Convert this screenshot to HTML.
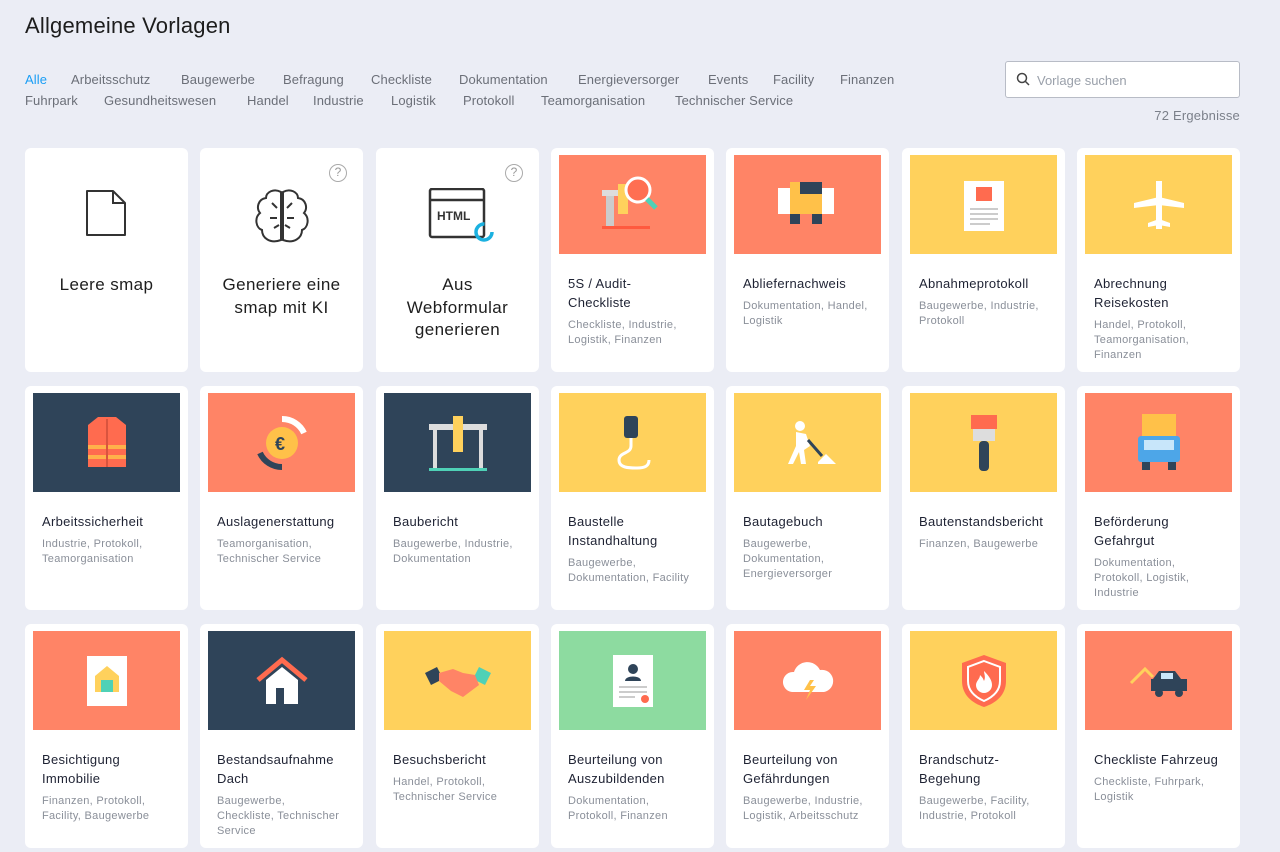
<!DOCTYPE html>
<html><head><meta charset="utf-8"><style>
*{margin:0;padding:0;box-sizing:border-box}
body{width:1280px;height:852px;overflow:hidden;background:#ebedf5;font-family:"Liberation Sans",sans-serif;position:relative;color:#222}
h1{position:absolute;left:25px;top:13px;font-size:22px;font-weight:400;color:#1d1d1d;letter-spacing:0.2px}
.n{position:absolute;font-size:13px;color:#6b6f78;white-space:nowrap;letter-spacing:0.1px}
.search{position:absolute;left:1005px;top:61px;width:235px;height:37px;border:1px solid #b8bcc6;border-radius:3px;background:#fff;font-size:13px;color:#9aa0aa;padding:11px 0 0 31px}
.cnt{position:absolute;right:40px;top:108px;font-size:13px;color:#7b808a;letter-spacing:0.2px}
.card{position:absolute;width:163px;height:224px;background:#fff;border-radius:6px;overflow:hidden}
.img{position:absolute;left:8px;top:7px;width:147px;height:99px;display:flex;align-items:center;justify-content:center}
.t{position:absolute;left:17px;top:126px;right:6px;font-size:13px;line-height:19px;color:#1e2233;letter-spacing:0.3px}
.g{font-size:11px;line-height:15px;color:#8a8f99;margin-top:6px;letter-spacing:0.3px}
.big{position:absolute;left:0;right:0;top:126px;text-align:center;font-size:17px;line-height:22.5px;color:#1e1e1e;letter-spacing:0.4px}
.q{position:absolute;right:16px;top:16px;width:18px;height:18px;border:1.5px solid #aaa;border-radius:50%;font-size:12px;color:#999;text-align:center;line-height:15px}
.co{background:#ff8466}.ye{background:#ffd15c}.da{background:#2f4459}.gr{background:#8ddba0}
</style></head><body>
<h1>Allgemeine Vorlagen</h1>
<div class="n" style="top:72px;left:25px;color:#1a9ef5">Alle</div>
<div class="n" style="top:72px;left:71px">Arbeitsschutz</div>
<div class="n" style="top:72px;left:181px">Baugewerbe</div>
<div class="n" style="top:72px;left:283px">Befragung</div>
<div class="n" style="top:72px;left:371px">Checkliste</div>
<div class="n" style="top:72px;left:459px">Dokumentation</div>
<div class="n" style="top:72px;left:578px">Energieversorger</div>
<div class="n" style="top:72px;left:708px">Events</div>
<div class="n" style="top:72px;left:773px">Facility</div>
<div class="n" style="top:72px;left:840px">Finanzen</div>
<div class="n" style="top:93px;left:25px">Fuhrpark</div>
<div class="n" style="top:93px;left:104px">Gesundheitswesen</div>
<div class="n" style="top:93px;left:247px">Handel</div>
<div class="n" style="top:93px;left:313px">Industrie</div>
<div class="n" style="top:93px;left:391px">Logistik</div>
<div class="n" style="top:93px;left:463px">Protokoll</div>
<div class="n" style="top:93px;left:541px">Teamorganisation</div>
<div class="n" style="top:93px;left:675px">Technischer Service</div>
<div class="search"><svg style="position:absolute;left:10px;top:10px" width="14" height="14" viewBox="0 0 14 14"><circle cx="6" cy="6" r="4.5" fill="none" stroke="#444" stroke-width="1.5"/><path d="M9.5 9.5L13 13" stroke="#444" stroke-width="1.5"/></svg>Vorlage suchen</div>
<div class="cnt">72 Ergebnisse</div>

<div class="card" style="left:25px;top:148px"><svg style="position:absolute;left:60px;top:40px" width="44" height="50" viewBox="0 0 44 50"><path d="M2 3h26l12 12v32H2z" fill="none" stroke="#333" stroke-width="2" stroke-linejoin="round"/><path d="M28 3v12h12" fill="none" stroke="#333" stroke-width="2"/></svg><div class="big" style="top:126px">Leere smap</div></div>
<div class="card" style="left:200px;top:148px"><div class="q">?</div><svg style="position:absolute;left:52px;top:40px" width="60" height="58" viewBox="0 0 60 58"><path d="M29 4C22 0 14 4 14 10 6 11 4 20 8 25 2 30 4 40 10 42 10 50 18 56 29 52Z M31 4C38 0 46 4 46 10 54 11 56 20 52 25 58 30 56 40 50 42 50 50 42 56 31 52Z" fill="none" stroke="#333" stroke-width="2"/><path d="M30 4V52M20 15l5 5M40 15l-5 5M18 30h7M42 30h-7M22 40l5-3M38 40l-5-3" stroke="#333" stroke-width="2"/></svg><div class="big">Generiere eine<br>smap mit KI</div></div>
<div class="card" style="left:376px;top:148px"><div class="q">?</div><svg style="position:absolute;left:52px;top:40px" width="70" height="56" viewBox="0 0 70 56"><rect x="2" y="1" width="54" height="48" rx="2" fill="none" stroke="#333" stroke-width="2.5"/><path d="M2 12h54" stroke="#333" stroke-width="2.5"/><text x="9" y="32" font-family="Liberation Sans" font-weight="700" font-size="12" fill="#333">HTML</text><circle cx="56" cy="44" r="8" fill="none" stroke="#1bb1e0" stroke-width="3.5" stroke-dasharray="38 12"/></svg><div class="big">Aus<br>Webformular<br>generieren</div></div>

<div class="card" style="left:551px;top:148px"><div class="img co"><svg width="70" height="70" viewBox="0 0 70 70"><rect x="8" y="20" width="8" height="36" fill="#ccc"/><rect x="4" y="20" width="30" height="6" fill="#ddd"/><rect x="20" y="14" width="10" height="30" fill="#ffd15c"/><circle cx="40" cy="20" r="12" fill="#ff6f52" stroke="#fff" stroke-width="3"/><path d="M49 29l9 9" stroke="#4fd1b6" stroke-width="5"/><rect x="4" y="56" width="48" height="3" fill="#ff5a3f"/></svg></div><div class="t">5S / Audit-<br>Checkliste<div class="g">Checkliste, Industrie,<br>Logistik, Finanzen</div></div></div>
<div class="card" style="left:726px;top:148px"><div class="img co"><svg width="60" height="50" viewBox="0 0 60 50"><rect x="0" y="8" width="56" height="26" fill="#fff"/><rect x="12" y="2" width="32" height="32" fill="#ffc149"/><rect x="22" y="2" width="22" height="12" fill="#2f4459"/><rect x="12" y="34" width="10" height="10" fill="#2f4459"/><rect x="34" y="34" width="10" height="10" fill="#2f4459"/></svg></div><div class="t">Abliefernachweis<div class="g">Dokumentation, Handel,<br>Logistik</div></div></div>
<div class="card" style="left:902px;top:148px"><div class="img ye"><svg width="44" height="56" viewBox="0 0 44 56"><rect x="2" y="4" width="40" height="50" fill="#fff"/><rect x="14" y="10" width="16" height="14" fill="#ff6b4f"/><path d="M8 32h28M8 37h28M8 42h28M8 47h20" stroke="#ccc" stroke-width="2"/></svg></div><div class="t">Abnahmeprotokoll<div class="g">Baugewerbe, Industrie,<br>Protokoll</div></div></div>
<div class="card" style="left:1077px;top:148px"><div class="img ye"><svg width="50" height="52" viewBox="0 0 50 52"><path d="M22 2h6v48h-6z M0 24l25-6 25 6v5l-25-3-25 3z M14 44l11-4 11 4v4l-11-2-11 2z" fill="#fff"/></svg></div><div class="t">Abrechnung<br>Reisekosten<div class="g">Handel, Protokoll,<br>Teamorganisation,<br>Finanzen</div></div></div>

<div class="card" style="left:25px;top:386px"><div class="img da"><svg width="46" height="56" viewBox="0 0 46 56"><path d="M4 10l10-8h18l10 8v42H4z" fill="#ff6b4f"/><path d="M4 32h38M4 42h38" stroke="#ffb14a" stroke-width="4"/><path d="M23 4v48" stroke="#d9543e" stroke-width="2"/></svg></div><div class="t">Arbeitssicherheit<div class="g">Industrie, Protokoll,<br>Teamorganisation</div></div></div>
<div class="card" style="left:200px;top:386px"><div class="img co"><svg width="60" height="60" viewBox="0 0 60 60"><path d="M30 6a24 24 0 0 1 22 14" stroke="#fff" stroke-width="6" fill="none"/><path d="M30 54a24 24 0 0 1-22-14" stroke="#2f4459" stroke-width="6" fill="none"/><circle cx="30" cy="30" r="16" fill="#ffc149"/><text x="23" y="37" font-size="18" font-weight="700" fill="#2f4459" font-family="Liberation Sans">€</text></svg></div><div class="t">Auslagenerstattung<div class="g">Teamorganisation,<br>Technischer Service</div></div></div>
<div class="card" style="left:376px;top:386px"><div class="img da"><svg width="70" height="62" viewBox="0 0 70 62"><rect x="6" y="12" width="58" height="6" fill="#ddd"/><rect x="10" y="12" width="4" height="46" fill="#ddd"/><rect x="56" y="12" width="4" height="46" fill="#ddd"/><rect x="30" y="4" width="10" height="36" fill="#ffd15c"/><rect x="6" y="56" width="58" height="3" fill="#4fd1b6"/></svg></div><div class="t">Baubericht<div class="g">Baugewerbe, Industrie,<br>Dokumentation</div></div></div>
<div class="card" style="left:551px;top:386px"><div class="img ye"><svg width="50" height="62" viewBox="0 0 50 62"><rect x="16" y="4" width="14" height="22" rx="3" fill="#2f4459"/><path d="M23 26v8c0 8-12 6-12 14s10 8 18 8 12-2 12-8" fill="none" stroke="#fff" stroke-width="3"/></svg></div><div class="t">Baustelle<br>Instandhaltung<div class="g">Baugewerbe,<br>Dokumentation, Facility</div></div></div>
<div class="card" style="left:726px;top:386px"><div class="img ye"><svg width="60" height="50" viewBox="0 0 60 50"><circle cx="22" cy="8" r="5" fill="#fff"/><path d="M18 14l10 2 4 12-6 4 2 14h-5l-2-12-6 12h-5l8-18z" fill="#fff"/><path d="M30 22l14 16" stroke="#2f4459" stroke-width="3"/><path d="M40 44l8-8 10 10H40z" fill="#fff"/></svg></div><div class="t">Bautagebuch<div class="g">Baugewerbe,<br>Dokumentation,<br>Energieversorger</div></div></div>
<div class="card" style="left:902px;top:386px"><div class="img ye"><svg width="30" height="60" viewBox="0 0 30 60"><rect x="2" y="2" width="26" height="14" fill="#ff6b4f"/><rect x="4" y="16" width="22" height="12" fill="#ddd"/><rect x="10" y="28" width="10" height="30" rx="4" fill="#2f4459"/></svg></div><div class="t">Bautenstandsbericht<div class="g">Finanzen, Baugewerbe</div></div></div>
<div class="card" style="left:1077px;top:386px"><div class="img co"><svg width="50" height="62" viewBox="0 0 50 62"><rect x="8" y="2" width="34" height="24" fill="#ffc149"/><rect x="4" y="24" width="42" height="26" rx="3" fill="#4da6e8"/><rect x="10" y="28" width="30" height="10" fill="#c8e6fa"/><rect x="8" y="50" width="8" height="8" fill="#2f4459"/><rect x="34" y="50" width="8" height="8" fill="#2f4459"/></svg></div><div class="t">Beförderung<br>Gefahrgut<div class="g">Dokumentation,<br>Protokoll, Logistik,<br>Industrie</div></div></div>

<div class="card" style="left:25px;top:624px"><div class="img co"><svg width="44" height="54" viewBox="0 0 44 54"><rect x="2" y="2" width="40" height="50" fill="#fff"/><path d="M10 22l12-10 12 10v16H10z" fill="#ffd15c"/><rect x="16" y="26" width="12" height="12" fill="#4fd1b6"/></svg></div><div class="t">Besichtigung<br>Immobilie<div class="g">Finanzen, Protokoll,<br>Facility, Baugewerbe</div></div></div>
<div class="card" style="left:200px;top:624px"><div class="img da"><svg width="56" height="50" viewBox="0 0 56 50"><path d="M4 24L28 4l24 20" fill="none" stroke="#ff6b4f" stroke-width="5"/><path d="M12 24l16-13 16 13v24H12z" fill="#fff"/><rect x="22" y="32" width="8" height="16" fill="#2f4459"/></svg></div><div class="t">Bestandsaufnahme<br>Dach<div class="g">Baugewerbe,<br>Checkliste, Technischer<br>Service</div></div></div>
<div class="card" style="left:376px;top:624px"><div class="img ye"><svg width="70" height="40" viewBox="0 0 70 40"><path d="M2 12l12-6 6 12-12 6z" fill="#2f4459"/><path d="M68 12l-12-6-6 12 12 6z" fill="#4fd1b6"/><path d="M16 12l14-4 10 4 12 2 4 10-16 12-12-6-12-10z" fill="#ff8466"/></svg></div><div class="t">Besuchsbericht<div class="g">Handel, Protokoll,<br>Technischer Service</div></div></div>
<div class="card" style="left:551px;top:624px"><div class="img gr"><svg width="44" height="56" viewBox="0 0 44 56"><rect x="2" y="2" width="40" height="52" fill="#fff"/><circle cx="22" cy="16" r="5" fill="#2f4459"/><path d="M14 28c0-6 16-6 16 0z" fill="#2f4459"/><path d="M8 34h28M8 39h28M8 44h16" stroke="#ccc" stroke-width="2"/><circle cx="34" cy="46" r="4" fill="#ff6b4f"/></svg></div><div class="t">Beurteilung von<br>Auszubildenden<div class="g">Dokumentation,<br>Protokoll, Finanzen</div></div></div>
<div class="card" style="left:726px;top:624px"><div class="img co"><svg width="56" height="46" viewBox="0 0 56 46"><path d="M12 34a10 10 0 0 1 2-20 14 14 0 0 1 26-2 11 11 0 0 1 4 22z" fill="#fff"/><path d="M30 22l-6 10h6l-4 10 10-14h-6l4-6z" fill="#ffc149"/></svg></div><div class="t">Beurteilung von<br>Gefährdungen<div class="g">Baugewerbe, Industrie,<br>Logistik, Arbeitsschutz</div></div></div>
<div class="card" style="left:902px;top:624px"><div class="img ye"><svg width="50" height="56" viewBox="0 0 50 56"><path d="M25 2l22 8v18c0 14-10 22-22 26C13 50 3 42 3 28V10z" fill="#ff6b4f"/><path d="M25 8l16 6v14c0 10-7 16-16 20-9-4-16-10-16-20V14z" fill="none" stroke="#fff" stroke-width="2"/><path d="M25 18c6 6 8 10 8 14a8 8 0 0 1-16 0c0-4 4-6 4-10 2 2 3 3 4 6 2-4 0-7 0-10z" fill="#fff"/></svg></div><div class="t">Brandschutz-<br>Begehung<div class="g">Baugewerbe, Facility,<br>Industrie, Protokoll</div></div></div>
<div class="card" style="left:1077px;top:624px"><div class="img co"><svg width="64" height="40" viewBox="0 0 64 40"><path d="M4 22l14-14 8 8" fill="none" stroke="#ffd15c" stroke-width="3"/><path d="M26 18l6-8h16l6 8h6v12H24V18z" fill="#2f4459"/><rect x="34" y="12" width="12" height="6" fill="#c8e6fa"/><circle cx="32" cy="32" r="4" fill="#2f4459"/><circle cx="52" cy="32" r="4" fill="#2f4459"/></svg></div><div class="t">Checkliste Fahrzeug<div class="g">Checkliste, Fuhrpark,<br>Logistik</div></div></div>
</body></html>
